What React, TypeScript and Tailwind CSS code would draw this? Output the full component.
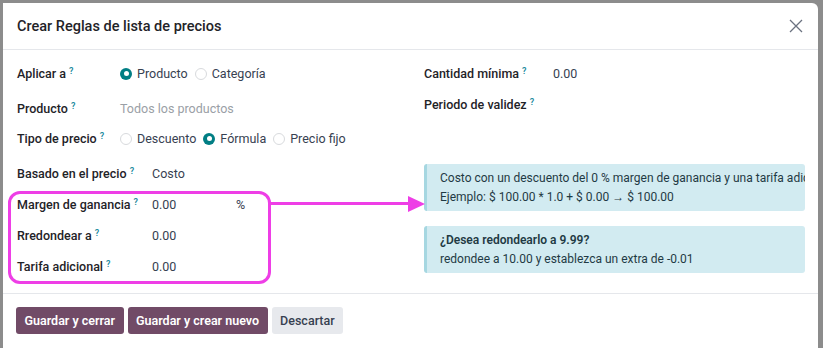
import React from "react";

function Help() {
  return <sup className="ml-[3px] text-[9px] font-semibold text-[#1c8a9e]">?</sup>;
}

function Radio({ checked, label }: { checked?: boolean; label: string }) {
  return (
    <span className="flex items-center gap-[5px]">
      {checked ? (
        <span className="flex h-[12px] w-[12px] items-center justify-center rounded-full bg-[#017e84]">
          <span className="h-[5px] w-[5px] rounded-full bg-white" />
        </span>
      ) : (
        <span className="h-[12px] w-[12px] rounded-full border border-[#d8dadd] bg-white" />
      )}
      <span>{label}</span>
    </span>
  );
}

function Field({ label, children, labelW = "w-[103px]" }: { label: string; children?: React.ReactNode; labelW?: string }) {
  return (
    <div className="flex h-[19px] items-center whitespace-nowrap">
      <div className={`${labelW} shrink-0 font-medium text-[#1f2328]`}>
        {label}
        <Help />
      </div>
      <div className="flex items-center gap-[7px] text-[#374151]">{children}</div>
    </div>
  );
}

export default function App() {
  return (
    <div
      className="h-[348px] w-[823px] overflow-hidden bg-[#8c8c8c] pl-[3px] pr-[5px] pt-[3px]"
      style={{ fontFamily: "Roboto, 'Noto Sans', sans-serif" }}
    >
      <div className="relative h-[345px] rounded-tr-[6px] bg-white text-[12.5px] leading-[19px]">
        {/* header */}
        <div className="flex h-[47px] items-center justify-between border-b border-[#e5e7eb] pl-[14px] pr-[14px]">
          <div className="text-[14.5px] font-medium text-[#1f2328]">Crear Reglas de lista de precios</div>
          <svg width="14" height="14" viewBox="0 0 14 14" className="mr-[1px]">
            <path d="M1 1L13 13M13 1L1 13" stroke="#6b7280" strokeWidth="1.3" />
          </svg>
        </div>

        {/* body */}
        <div className="flex h-[244px] border-b border-[#e5e7eb] pl-[14px] pr-[13px]">
          <div className="flex w-[407px] shrink-0 flex-col">
            <div className="mt-[14px]">
              <Field label="Aplicar a">
                <Radio checked label="Producto" />
                <Radio label="Categoría" />
              </Field>
            </div>
            <div className="mt-[16px]">
              <Field label="Producto">
                <span className="text-[#9aa0a6]">Todos los productos</span>
              </Field>
            </div>
            <div className="mt-[11px]">
              <Field label="Tipo de precio">
                <Radio label="Descuento" />
                <Radio checked label="Fórmula" />
                <Radio label="Precio fijo" />
              </Field>
            </div>
            <div className="mt-[16px] flex flex-col gap-[12px]">
              <Field label="Basado en el precio" labelW="w-[135px]">
                Costo
              </Field>
              <Field label="Margen de ganancia" labelW="w-[135px]">
                <span className="w-[77px]">0.00</span>
                <span>%</span>
              </Field>
              <Field label="Rredondear a" labelW="w-[135px]">
                0.00
              </Field>
              <Field label="Tarifa adicional" labelW="w-[135px]">
                0.00
              </Field>
            </div>
          </div>

          <div className="flex min-w-0 flex-1 flex-col">
            <div className="mt-[14px]">
              <Field label="Cantidad mínima" labelW="w-[129px]">
                0.00
              </Field>
            </div>
            <div className="mt-[12px]">
              <Field label="Periodo de validez" labelW="w-[129px]" />
            </div>
            <div className="mt-[50px] h-[47px] overflow-hidden whitespace-nowrap rounded-[3px] border-l-[3px] border-[#a6d7e1] bg-[#d2ebf1] pl-[13px] pt-[5px] text-[12px] text-[#1f3a44]">
              <div>Costo con un descuento del 0 % margen de ganancia y una tarifa adicional de $ 0.00</div>
              <div>Ejemplo: $ 100.00 * 1.0 + $ 0.00 → $ 100.00</div>
            </div>
            <div className="mt-[15px] h-[47px] rounded-[3px] border-l-[3px] border-[#a6d7e1] bg-[#d2ebf1] pl-[13px] pt-[5px] text-[12px] text-[#1f3a44]">
              <div className="font-semibold">¿Desea redondearlo a 9.99?</div>
              <div>redondee a 10.00 y establezca un extra de -0.01</div>
            </div>
          </div>
        </div>

        {/* footer */}
        <div className="flex gap-[4px] pl-[13px] pt-[13px]">
          <button className="h-[27px] rounded-[3px] bg-[#714b67] px-[8.5px] font-semibold text-white">Guardar y cerrar</button>
          <button className="h-[27px] rounded-[3px] bg-[#714b67] px-[8.5px] font-semibold text-white">Guardar y crear nuevo</button>
          <button className="h-[27px] rounded-[3px] bg-[#e7e9ed] px-[8.5px] font-medium text-[#374151]">Descartar</button>
        </div>

        {/* annotation */}
        <div className="absolute left-[5px] top-[188px] h-[93px] w-[263px] rounded-[12px] border-[3px] border-[#ee3ee6]" />
        <div className="absolute left-[267px] top-[199px] h-[3px] w-[142px] bg-[#ee3ee6]" />
        <svg className="absolute left-[405px] top-[192px]" width="18" height="18" viewBox="0 0 18 18">
          <path d="M0 1L17 9L0 17Z" fill="#ee3ee6" />
        </svg>
      </div>
    </div>
  );
}
